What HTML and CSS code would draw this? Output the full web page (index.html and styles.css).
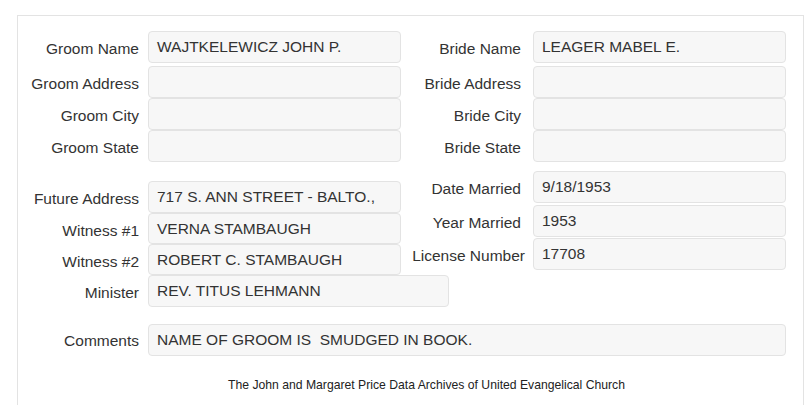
FILE: index.html
```html
<!DOCTYPE html>
<html lang="en">
<head>
    <meta charset="UTF-8">
    <meta name="viewport" content="width=device-width, initial-scale=1.0">
    <title>Marriage Record</title>
    <link rel="stylesheet" href="styles.css">
</head>
<body>
    <div class="panel">
        <!-- Groom / Bride -->
        <div class="section">
            <div class="col left">
                <div class="field first"><label>Groom Name</label><div class="value">WAJTKELEWICZ JOHN P.</div></div>
                <div class="field"><label>Groom Address</label><div class="value"></div></div>
                <div class="field"><label>Groom City</label><div class="value"></div></div>
                <div class="field"><label>Groom State</label><div class="value"></div></div>
            </div>
            <div class="col right">
                <div class="field first"><label>Bride Name</label><div class="value">LEAGER MABEL E.</div></div>
                <div class="field"><label>Bride Address</label><div class="value"></div></div>
                <div class="field"><label>Bride City</label><div class="value"></div></div>
                <div class="field"><label>Bride State</label><div class="value"></div></div>
            </div>
        </div>

        <!-- Marriage details -->
        <div class="section details">
            <div class="col left lower">
                <div class="field"><label>Future Address</label><div class="value">717 S. ANN STREET - BALTO.,</div></div>
                <div class="field short"><label>Witness #1</label><div class="value">VERNA STAMBAUGH</div></div>
                <div class="field short"><label>Witness #2</label><div class="value">ROBERT C. STAMBAUGH</div></div>
                <div class="field"><label>Minister</label><div class="value wide">REV. TITUS LEHMANN</div></div>
            </div>
            <div class="col right">
                <div class="field"><label>Date Married</label><div class="value">9/18/1953</div></div>
                <div class="field gap2"><label>Year Married</label><div class="value">1953</div></div>
                <div class="field gap1"><label class="long">License Number</label><div class="value">17708</div></div>
            </div>
        </div>

        <div class="field comments"><label>Comments</label><div class="value full">NAME OF GROOM IS&nbsp; SMUDGED IN BOOK.</div></div>

        <div class="footer-text">The John and Margaret Price Data Archives of United Evangelical Church</div>
    </div>
</body>
</html>
```

FILE: styles.css
```css
body {
    margin: 0;
    padding: 0;
    font-family: "Liberation Sans", Arial, sans-serif;
    color: #333;
    background: #fff;
    overflow: hidden;
}

.panel {
    box-sizing: border-box;
    width: 787px;
    height: 390px;
    margin: 15px 0 0 17px;
    border: 1px solid #e3e3e3;
    border-bottom: 0;
    padding-top: 15px;
}

.section {
    display: flex;
    align-items: flex-start;
}

.details {
    margin-top: 9px;
}

.col {
    display: flex;
    flex-direction: column;
    flex-shrink: 0;
}

.col.left {
    width: 383px;
}

.left label {
    width: 121px;
    padding-right: 9px;
}

.right label {
    width: 120px;
    padding-right: 12px;
}

.right label.long {
    width: 124px;
    padding-right: 8px;
}

.lower {
    padding-top: 10px;
}

.field {
    display: flex;
    align-items: center;
    font-size: 15.5px;
}

.field.first {
    margin-bottom: 3px;
}

.field.short .value {
    height: 31px;
}

.field.gap2 {
    margin-top: 2px;
}

.field.gap1 {
    margin-top: 1px;
}

label {
    flex-shrink: 0;
    text-align: right;
    white-space: nowrap;
    padding-top: 4px;
    color: #333;
}

.value {
    flex-shrink: 0;
    box-sizing: border-box;
    width: 253px;
    height: 32px;
    padding: 0 8px;
    line-height: 30px;
    background: #f7f7f7;
    border: 1px solid #e3e3e3;
    border-radius: 4px;
    color: #333;
    white-space: nowrap;
    overflow: hidden;
}

.value.wide {
    width: 301px;
}

.comments {
    margin-top: 17px;
}

.comments label {
    width: 121px;
    padding-right: 9px;
    padding-top: 1px;
}

.value.full {
    width: 638px;
}

.footer-text {
    font-size: 12.2px;
    text-align: center;
    padding-left: 32px;
    margin-top: 22px;
    color: #222;
}
```
